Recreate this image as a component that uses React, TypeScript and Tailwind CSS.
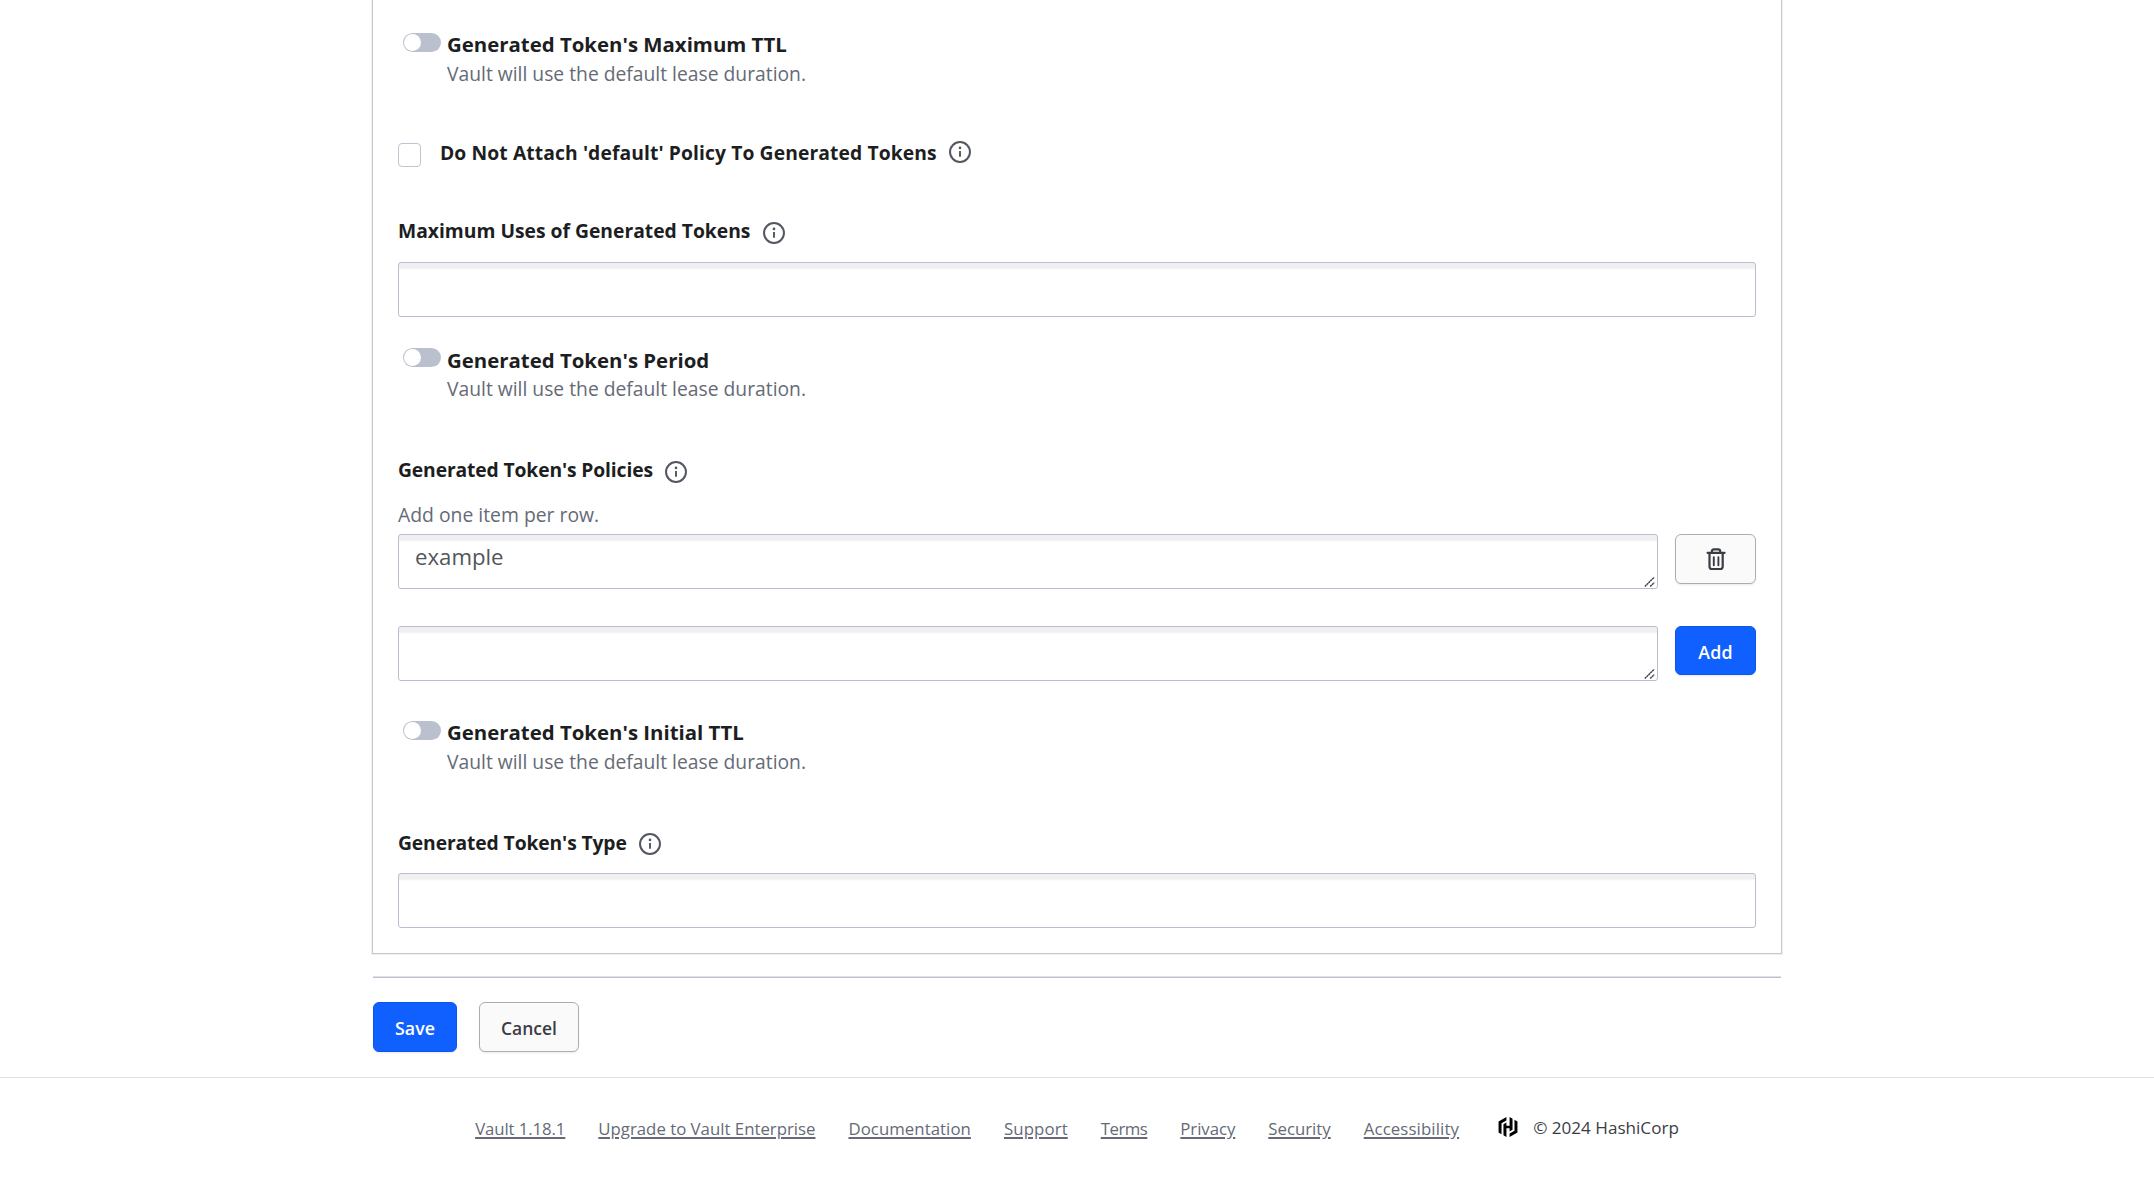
import React from "react";
import { SiHashicorp } from "react-icons/si";

function InfoIcon({ className = "" }: { className?: string }) {
  return (
    <svg viewBox="0 0 16 16" className={`size-[22px] shrink-0 text-[#535762] ${className}`} fill="none">
      <circle cx="8" cy="8" r="7.25" stroke="currentColor" strokeWidth="1.45" />
      <circle cx="8" cy="5" r="0.95" fill="currentColor" />
      <path d="M8 7.3v4.1" stroke="currentColor" strokeWidth="1.4" />
    </svg>
  );
}

function TrashIcon() {
  return (
    <svg viewBox="0 0 21 24" className="h-6 w-[21px]" fill="none" stroke="#3b3d45" strokeWidth="2.2" strokeLinecap="round">
      <path d="M2.6 5.8h17" />
      <path d="M6.9 5.4V4.3a2 2 0 0 1 2-2h4.3a2 2 0 0 1 2 2v1.1" />
      <path d="M4.5 6.2v13.6a2.2 2.2 0 0 0 2.2 2.2h8.8a2.2 2.2 0 0 0 2.2-2.2V6.2" />
      <path d="M8.8 10.3v8M13.4 10.3v8" strokeWidth="1.9" />
    </svg>
  );
}

function Toggle({ title, className, titleClass = "" }: { title: string; className: string; titleClass?: string }) {
  return (
    <div className={`flex h-[58px] gap-[6px] pl-[5px] ${className}`}>
      <span className="mt-[3px] flex h-[19px] w-[38px] rounded-full bg-[#bac0cd] p-px">
        <span className="h-[17px] w-[17px] rounded-full bg-white" />
      </span>
      <div>
        <div className={`h-7 text-[20.4px] leading-7 font-bold text-[#1c1e22] ${titleClass}`}>{title}</div>
        <div className="mt-0.5 text-[19.3px] leading-7 text-[#656a76]">Vault will use the default lease duration.</div>
      </div>
    </div>
  );
}

const field =
  "block h-[55px] rounded-[3px] border border-[#b8becd] bg-white bg-[linear-gradient(#f0f0f1_0,#f0f0f1_5px,#ffffff_7px)] outline-none";

function TextInput({ className }: { className: string }) {
  return <input className={`${field} w-full px-4 ${className}`} />;
}

function ResizableField({ value }: { value: string }) {
  return (
    <div className="relative flex-1">
      <textarea
        defaultValue={value}
        rows={1}
        className={`${field} w-full resize-none overflow-hidden px-4 pt-[7px] text-[22.2px] leading-[30px] text-[#535659]`}
      />
      <svg viewBox="0 0 12 12" className="absolute right-[2px] bottom-[1px] size-3" stroke="#3f3f42" strokeWidth="1.4">
        <path d="M0.8 10.6 10.2 1.2M6.2 10.6l4-4" strokeDasharray="2.2 0.4" />
      </svg>
    </div>
  );
}

const label = "flex h-7 text-[19.3px] leading-[30px] font-bold text-[#1c1e22]";
const primary =
  "rounded-[6px] border border-[#0c56e9] bg-[#1060ff] text-[17.8px] font-semibold text-white shadow-[0_1px_1px_#656a760d,0_2px_2px_#656a760d] flex items-center justify-center";
const secondary =
  "rounded-[6px] border border-[#adadb0] bg-[#fafafa] text-[17.5px] font-semibold text-[#3b3d45] shadow-[0_1px_1px_#656a760d,0_2px_2px_#656a760d] flex items-center justify-center";

const links = [
  { text: "Vault 1.18.1", tracking: "tracking-[-0.1px]" },
  { text: "Upgrade to Vault Enterprise", tracking: "" },
  { text: "Documentation", tracking: "tracking-[0.05px]" },
  { text: "Support", tracking: "tracking-[0.13px]" },
  { text: "Terms", tracking: "tracking-[-0.5px]" },
  { text: "Privacy", tracking: "tracking-[-0.06px]" },
  { text: "Security", tracking: "" },
  { text: "Accessibility", tracking: "tracking-[0.13px]" },
];

export default function App() {
  return (
    <div className="h-[1177px] overflow-hidden bg-white font-['Open_Sans',sans-serif]">
      <main className="mx-auto w-[1410px]">
        <section className="h-[954px] border border-t-0 border-[#c8c9ce] px-[25px] pt-[30px] shadow-[0_0_0_1px_#f0f0f2]">
          <Toggle title="Generated Token's Maximum TTL" className="" />

          <div className={`${label} mt-[50px]`}>
            <span className="mt-[5px] h-6 w-[23px] rounded-[4px] border border-[#bfc4d0] bg-white" />
            <span className="ml-[19px] tracking-[0.1px]">Do Not Attach 'default' Policy To Generated Tokens</span>
            <InfoIcon className="mt-[3px] ml-[12px]" />
          </div>

          <div className={`${label} mt-[50px]`}>
            <span>Maximum Uses of Generated Tokens</span>
            <InfoIcon className="mt-[6px] ml-[13px]" />
          </div>
          <TextInput className="mt-[18px]" />

          <Toggle title="Generated Token's Period" className="mt-7" titleClass="pt-px" />

          <div className={`${label} mt-[52px]`}>
            <span className="tracking-[-0.13px]">Generated Token's Policies</span>
            <InfoIcon className="mt-[6px] ml-[12px]" />
          </div>
          <div className="mt-[18px] text-[19.35px] leading-7 text-[#656a76]">Add one item per row.</div>
          <div className="mt-[5px] flex gap-[17px]">
            <ResizableField value="example" />
            <button className={`${secondary} h-[50px] w-[81px]`}>
              <TrashIcon />
            </button>
          </div>
          <div className="mt-[37px] flex gap-[17px]">
            <ResizableField value="" />
            <button className={`${primary} h-[49px] w-[81px] pt-[3px] tracking-[0.2px]`}>Add</button>
          </div>

          <Toggle title="Generated Token's Initial TTL" className="mt-[37px]" />

          <div className={`${label} mt-[52px]`}>
            <span className="tracking-[-0.12px]">Generated Token's Type</span>
            <InfoIcon className="mt-[5px] ml-[12px]" />
          </div>
          <TextInput className="mt-[17px]" />
        </section>

        <div className="mx-px mt-[22px] h-0.5 border-t border-b border-t-[#e0e2ea] border-b-[#bcbfcd]" />

        <div className="mt-6 flex gap-[22px] pl-px">
          <button className={`${primary} h-[50px] w-[84px] pt-[3px]`}>Save</button>
          <button className={`${secondary} h-[50px] w-[100px] pt-[3px]`}>Cancel</button>
        </div>
      </main>

      <footer className="mt-[25px] flex justify-center border-t border-[#dedfe3] pt-[38px] text-[16.8px] leading-6 text-[#656a76]">
        <nav className="mt-px flex gap-[33px]">
          {links.map((l) => (
            <a key={l.text} className={`underline decoration-2 underline-offset-[2px] ${l.tracking}`}>
              {l.text}
            </a>
          ))}
        </nav>
        <SiHashicorp className="mt-px ml-[39px] size-5 text-black" />
        <span className="ml-[15px] text-[17.1px] text-[#3b3d45]">© 2024 HashiCorp</span>
      </footer>
    </div>
  );
}
